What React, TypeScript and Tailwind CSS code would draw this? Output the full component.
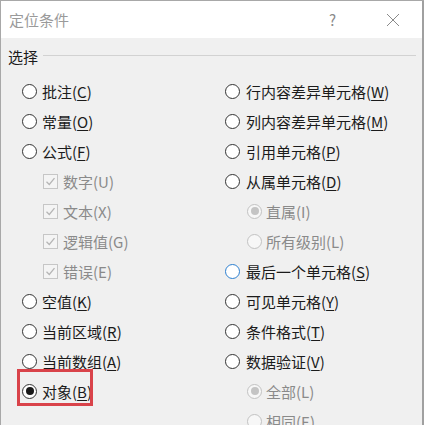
import React from "react";

const font = { fontFamily: '"Microsoft YaHei", "Noto Sans CJK SC", "Noto Sans", sans-serif' };

function Label({ text, k, disabled }: { text: string; k?: string; disabled?: boolean }) {
  return (
    <span className={`text-[15px] leading-none whitespace-nowrap ${disabled ? "text-[#8a8a8a]" : "text-[#1b1b1b]"}`}>
      {text}(
      {disabled ? k : <span className="underline underline-offset-2 decoration-1">{k}</span>})
    </span>
  );
}

function Radio({ checked, disabled, focus }: { checked?: boolean; disabled?: boolean; focus?: boolean }) {
  const border = focus ? "border-[#2c7fd0]" : disabled ? "border-[#c2c2c2]" : "border-[#333333]";
  const bg = disabled ? "bg-[#f7f7f7]" : "bg-white";
  return (
    <span className={`w-[15px] h-[15px] rounded-full border ${border} ${bg} flex items-center justify-center shrink-0`}>
      {checked && <span className={`w-[8px] h-[8px] rounded-full ${disabled ? "bg-[#c4c4c4]" : "bg-[#1a1a1a]"}`} />}
    </span>
  );
}

function Check() {
  return (
    <span className="w-[15px] h-[15px] border border-[#c6c6c6] bg-[#f4f4f4] flex items-center justify-center shrink-0">
      <svg width="11" height="11" viewBox="0 0 11 11">
        <path d="M1.5 5.8 L4.3 8.5 L9.5 2.2" fill="none" stroke="#b5b5b5" strokeWidth="1.3" />
      </svg>
    </span>
  );
}

type Item = { t: string; k: string; type: "radio" | "check" | "subradio"; checked?: boolean; disabled?: boolean; focus?: boolean; boxed?: boolean };

const left: Item[] = [
  { t: "批注", k: "C", type: "radio" },
  { t: "常量", k: "O", type: "radio" },
  { t: "公式", k: "F", type: "radio" },
  { t: "数字", k: "U", type: "check", disabled: true },
  { t: "文本", k: "X", type: "check", disabled: true },
  { t: "逻辑值", k: "G", type: "check", disabled: true },
  { t: "错误", k: "E", type: "check", disabled: true },
  { t: "空值", k: "K", type: "radio" },
  { t: "当前区域", k: "R", type: "radio" },
  { t: "当前数组", k: "A", type: "radio" },
  { t: "对象", k: "B", type: "radio", checked: true, boxed: true },
];

const right: Item[] = [
  { t: "行内容差异单元格", k: "W", type: "radio" },
  { t: "列内容差异单元格", k: "M", type: "radio" },
  { t: "引用单元格", k: "P", type: "radio" },
  { t: "从属单元格", k: "D", type: "radio" },
  { t: "直属", k: "I", type: "subradio", disabled: true, checked: true },
  { t: "所有级别", k: "L", type: "subradio", disabled: true },
  { t: "最后一个单元格", k: "S", type: "radio", focus: true },
  { t: "可见单元格", k: "Y", type: "radio" },
  { t: "条件格式", k: "T", type: "radio" },
  { t: "数据验证", k: "V", type: "radio" },
  { t: "全部", k: "L", type: "subradio", disabled: true, checked: true },
  { t: "相同", k: "E", type: "subradio", disabled: true },
];

function Row({ it, side }: { it: Item; side: "l" | "r" }) {
  let indent = "";
  let gap = side === "l" ? "gap-[5px]" : "gap-[6px]";
  if (it.type === "check") {
    indent = "pl-[21px]";
  } else if (it.type === "subradio") {
    indent = "pl-[22px]";
    gap = "gap-[4px]";
  }
  const control =
    it.type === "check" ? <Check /> : <Radio checked={it.checked} disabled={it.disabled} focus={it.focus} />;
  return (
    <div className={`h-[30px] flex items-center ${indent}`}>
      <div className={`relative flex items-center ${gap}`}>
        {it.boxed && (
          <span className="absolute left-[-5px] top-[-15px] w-[76px] h-[37px] border-[3px] border-[#d9434a]" />
        )}
        {control}
        <Label text={it.t} k={it.k} disabled={it.disabled} />
      </div>
    </div>
  );
}

export default function App() {
  return (
    <div style={font} className="w-[424px] h-[425px] overflow-hidden bg-[#f0f0f0] border-l border-t border-[#a8a8a8] flex flex-col relative">
      <div className="absolute right-0 top-0 bottom-0 w-[2px] bg-[#a0a0a0]" />
      <div className="h-[37px] bg-white flex items-center shrink-0">
        <span className="pl-[8px] text-[15px] leading-none text-[#9a9a9a]">定位条件</span>
        <span className="ml-auto mr-[50px] text-[15px] leading-none text-[#8a8a8a]">?</span>
        <svg width="14" height="14" viewBox="0 0 14 14" className="mr-[24px]">
          <path d="M1 1 L13 13 M13 1 L1 13" stroke="#8a8a8a" strokeWidth="1" />
        </svg>
      </div>
      <div className="h-[38px] flex items-center pl-[7px] pr-[8px] shrink-0">
        <span className="text-[15px] leading-none text-[#1b1b1b] -mt-[2px]">选择</span>
        <span className="flex-1 h-px bg-[#d2d2d2] ml-[5px] -mt-[4px]" />
      </div>
      <div className="flex pl-[21px]">
        <div className="w-[203px] flex flex-col">
          {left.map((it, i) => (
            <Row key={i} it={it} side="l" />
          ))}
        </div>
        <div className="flex flex-col">
          {right.map((it, i) => (
            <Row key={i} it={it} side="r" />
          ))}
        </div>
      </div>
    </div>
  );
}
